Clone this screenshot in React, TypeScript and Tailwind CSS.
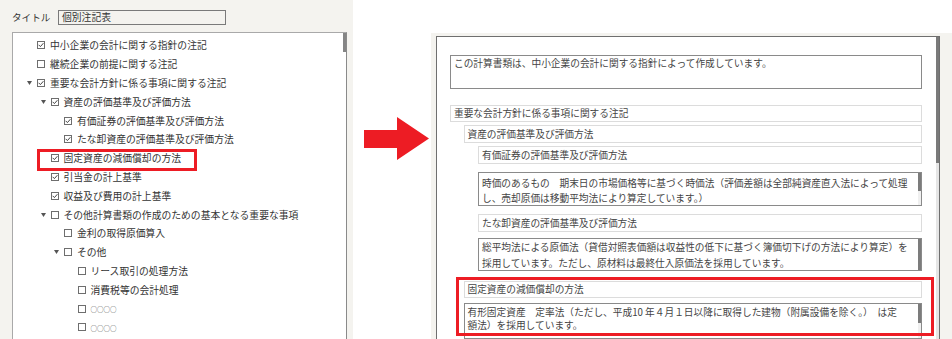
import React from "react";

type TreeNode = { level: 1 | 2 | 3 | 4; label: string; checked: boolean; arrow?: boolean; small?: boolean };

const tree: TreeNode[] = [
  { level: 1, label: "中小企業の会計に関する指針の注記", checked: true },
  { level: 1, label: "継続企業の前提に関する注記", checked: false },
  { level: 1, label: "重要な会計方針に係る事項に関する注記", checked: true, arrow: true },
  { level: 2, label: "資産の評価基準及び評価方法", checked: true, arrow: true },
  { level: 3, label: "有価証券の評価基準及び評価方法", checked: true },
  { level: 3, label: "たな卸資産の評価基準及び評価方法", checked: true },
  { level: 2, label: "固定資産の減価償却の方法", checked: true },
  { level: 2, label: "引当金の計上基準", checked: true },
  { level: 2, label: "収益及び費用の計上基準", checked: true },
  { level: 2, label: "その他計算書類の作成のための基本となる重要な事項", checked: false, arrow: true },
  { level: 3, label: "金利の取得原価算入", checked: false },
  { level: 3, label: "その他", checked: false, arrow: true },
  { level: 4, label: "リース取引の処理方法", checked: false },
  { level: 4, label: "消費税等の会計処理", checked: false },
  { level: 4, label: "○○○○", checked: false, small: true },
  { level: 4, label: "○○○○", checked: false, small: true },
  { level: 4, label: "", checked: false, small: true },
];

const indent: Record<number, string> = {
  1: "pl-[14px]",
  2: "pl-[27.5px]",
  3: "pl-[41px]",
  4: "pl-[54.5px]",
};

function CheckBox({ checked }: { checked: boolean }) {
  return (
    <div className="w-[8px] h-[8px] border border-[#6e6e6e] bg-white flex items-center justify-center shrink-0">
      {checked && (
        <svg width="6" height="6" viewBox="0 0 6 6">
          <polyline points="0.6,2.8 2.4,4.6 5.4,1.2" fill="none" stroke="#444" strokeWidth="1" />
        </svg>
      )}
    </div>
  );
}

function TreeRow({ node }: { node: TreeNode }) {
  return (
    <div className={"h-[18.8px] flex items-center " + indent[node.level]}>
      <div className="w-[10px] h-full flex items-center shrink-0">
        {node.arrow && (
          <svg width="5" height="4" viewBox="0 0 5 4">
            <polygon points="0,0 5,0 2.5,4" fill="#555" />
          </svg>
        )}
      </div>
      <CheckBox checked={node.checked} />
      {node.small ? (
        node.label && (
          <span className="ml-[5px] text-[6.5px] leading-none mt-[2px] text-[#444] whitespace-nowrap">{node.label}</span>
        )
      ) : (
        <span className="ml-[5px] text-[9.8px] leading-[18px] text-[#333] whitespace-nowrap">{node.label}</span>
      )}
    </div>
  );
}

function Heading({ className, children }: { className: string; children: React.ReactNode }) {
  return (
    <div
      className={
        "bg-white border border-[#dcdcdc] pl-[3px] text-[9.7px] text-[#444] whitespace-nowrap overflow-hidden " + className
      }
    >
      {children}
    </div>
  );
}

function TextBox({
  className,
  textClass,
  thumb,
  children,
}: {
  className: string;
  textClass: string;
  thumb?: string;
  children: React.ReactNode;
}) {
  return (
    <div className={"bg-white border border-[#8a8a8a] flex " + className}>
      <div className={"flex-1 pl-[3px] text-[9.7px] text-[#444] whitespace-nowrap overflow-hidden " + textClass}>
        {children}
      </div>
      {thumb && (
        <div className="w-[3px] flex flex-col shrink-0">
          <div className={"bg-[#7c7c7c] " + thumb} />
          <div className="flex-1 bg-[#f0f0f0]" />
        </div>
      )}
    </div>
  );
}

export default function App() {
  return (
    <div className="w-[952px] h-[339px] overflow-hidden flex bg-white font-['Noto_Sans_CJK_JP','Noto_Sans',sans-serif]">
      {/* Left panel */}
      <div className="relative w-[353px] h-full bg-[#f4f3ef] flex flex-col pl-[12px] pr-[6px] pt-[10px] shrink-0">
        <div className="flex items-center h-[15px]">
          <span className="w-[46px] text-[9.6px] leading-none text-[#333] whitespace-nowrap">タイトル</span>
          <div className="h-[15px] w-[168px] border border-[#7a7a7a] bg-[#f4f3ef] pl-[3px] text-[9.8px] leading-[13px] text-[#333]">
            個別注記表
          </div>
        </div>
        <div className="mt-[7px] flex-1 flex bg-white border-t border-l border-[#a9a9a9] border-r border-r-[#8a8a8a] min-h-0">
          <div className="flex-1 pt-[3px] overflow-hidden">
            {tree.map((n, i) => (
              <TreeRow key={i} node={n} />
            ))}
          </div>
          <div className="w-[3px] flex flex-col shrink-0">
            <div className="h-[19px] bg-[#858585]" />
            <div className="flex-1 bg-white" />
          </div>
        </div>
        <div className="absolute left-[37px] top-[149px] w-[160px] h-[22px] border-[3px] border-[#ed1c24]" />
      </div>

      {/* Arrow */}
      <div className="w-[78px] h-full pt-[117px] pl-[11px] shrink-0">
        <svg width="66" height="43" viewBox="0 0 66 43">
          <path d="M0 13 H33 V0 L65 21.5 L33 43 V31 H0 Z" fill="#ed1c24" />
        </svg>
      </div>

      {/* Right panel */}
      <div className="relative flex-1 h-full flex flex-col">
        <div className="h-[33px] bg-white shrink-0" />
        <div className="flex-1 bg-[#f4f3ef] pl-[5px] pt-[3px] pr-[12px] min-h-0">
          <div className="h-full bg-white border-l border-t border-r border-[#6f6f6f] flex">
            <div className="flex-1 pl-[13px] pr-[14px] pt-[18px] flex flex-col overflow-hidden">
              <TextBox className="h-[34px] shrink-0" textClass="leading-[15px] pt-[0px]">
                この計算書類は、中小企業の会計に関する指針によって作成しています。
              </TextBox>
              <Heading className="mt-[16px] h-[17px] leading-[15px] shrink-0">重要な会計方針に係る事項に関する注記</Heading>
              <Heading className="mt-[3px] ml-[13.5px] h-[18px] leading-[16px] shrink-0">資産の評価基準及び評価方法</Heading>
              <Heading className="mt-[3px] ml-[28px] h-[18px] leading-[16px] shrink-0">有価証券の評価基準及び評価方法</Heading>
              <TextBox className="mt-[8px] ml-[28px] h-[34px] shrink-0" textClass="leading-[15px] pt-[3px]" thumb="h-[18px]">
                時価のあるもの　期末日の市場価格等に基づく時価法（評価差額は全部純資産直入法によって処理
                <br />
                し、売却原価は移動平均法により算定しています。）
              </TextBox>
              <Heading className="mt-[8px] ml-[28px] h-[18px] leading-[16px] shrink-0">たな卸資産の評価基準及び評価方法</Heading>
              <TextBox className="mt-[6px] ml-[28px] h-[33px] shrink-0" textClass="leading-[16px] pt-[0px]" thumb="h-[31px]">
                総平均法による原価法（貸借対照表価額は収益性の低下に基づく簿価切下げの方法により算定）を
                <br />
                採用しています。ただし、原材料は最終仕入原価法を採用しています。
              </TextBox>
              <Heading className="mt-[10px] ml-[13.5px] h-[17px] leading-[15px] shrink-0">固定資産の減価償却の方法</Heading>
              <TextBox className="mt-[5px] ml-[13.5px] h-[36px] shrink-0" textClass="leading-[13.5px] pt-[1.5px]" thumb="h-[19px]">
                有形固定資産　定率法（ただし、平成10 年４月１日以降に取得した建物（附属設備を除く。）　は定
                <br />
                額法）を採用しています。
              </TextBox>
            </div>
            <div className="w-[3px] flex flex-col shrink-0">
              <div className="h-[126px] bg-[#7a7a7a]" />
              <div className="flex-1 bg-[#e6e6e6]" />
            </div>
          </div>
        </div>
        <div className="absolute left-[25px] top-[277px] w-[478px] h-[59px] border-[3px] border-[#ed1c24]" />
      </div>
    </div>
  );
}
